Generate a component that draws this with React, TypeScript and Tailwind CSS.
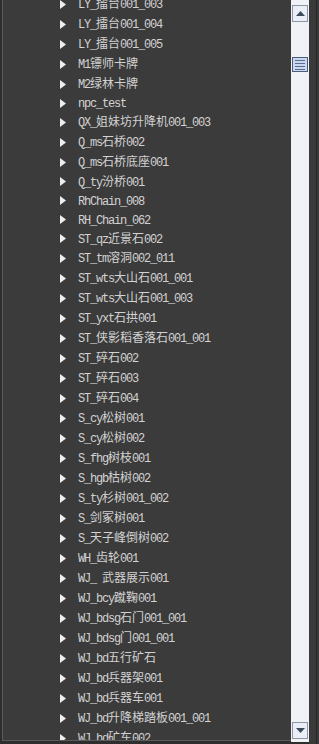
const items: { label: string; h: number }[] = [
  { label: "LY_擂台001_003", h: 20 },
  { label: "LY_擂台001_004", h: 20 },
  { label: "LY_擂台001_005", h: 20 },
  { label: "M1镖师卡牌", h: 20 },
  { label: "M2绿林卡牌", h: 20 },
  { label: "npc_test", h: 18 },
  { label: "QX_姐妹坊升降机001_003", h: 20 },
  { label: "Q_ms石桥002", h: 20 },
  { label: "Q_ms石桥底座001", h: 20 },
  { label: "Q_ty汾桥001", h: 19 },
  { label: "RhChain_008", h: 19 },
  { label: "RH_Chain_062", h: 19 },
  { label: "ST_qz近景石002", h: 19 },
  { label: "ST_tm溶洞002_011", h: 20 },
  { label: "ST_wts大山石001_001", h: 20 },
  { label: "ST_wts大山石001_003", h: 20 },
  { label: "ST_yxt石拱001", h: 20 },
  { label: "ST_侠影稻香落石001_001", h: 20 },
  { label: "ST_碎石002", h: 20 },
  { label: "ST_碎石003", h: 20 },
  { label: "ST_碎石004", h: 20 },
  { label: "S_cy松树001", h: 20 },
  { label: "S_cy松树002", h: 20 },
  { label: "S_fhg树枝001", h: 20 },
  { label: "S_hgb枯树002", h: 20 },
  { label: "S_ty杉树001_002", h: 20 },
  { label: "S_剑冢树001", h: 20 },
  { label: "S_天子峰倒树002", h: 20 },
  { label: "WH_齿轮001", h: 20 },
  { label: "WJ_ 武器展示001", h: 20 },
  { label: "WJ_bcy蹴鞠001", h: 20 },
  { label: "WJ_bdsg石门001_001", h: 20 },
  { label: "WJ_bdsg门001_001", h: 20 },
  { label: "WJ_bd五行矿石", h: 20 },
  { label: "WJ_bd兵器架001", h: 20 },
  { label: "WJ_bd兵器车001", h: 20 },
  { label: "WJ_bd升降梯踏板001_001", h: 20 },
  { label: "WJ_bd矿车002", h: 20 },
];

const rowHeight: Record<number, string> = {
  18: "h-[18px]",
  19: "h-[19px]",
  20: "h-[20px]",
};

// ascii runs in a mono face squeezed to a 6px advance, CJK runs at 12px, one baseline
function Label({ text }: { text: string }) {
  const parts = text.match(/[\x00-\xff]+|[^\x00-\xff]+/g) ?? [];
  return (
    <span className="block whitespace-pre text-[#d2d2d2] leading-[13px]">
      {parts.map((p, i) =>
        /^[\x00-\xff]/.test(p) ? (
          <span
            key={i}
            className="font-['Liberation_Mono',monospace] text-[12px] tracking-[-1.2px]"
          >
            {p}
          </span>
        ) : (
          <span
            key={i}
            className="font-['Noto_Sans_CJK_SC',sans-serif] text-[12px]"
          >
            {p}
          </span>
        )
      )}
    </span>
  );
}

function Arrow() {
  return (
    <svg width="6" height="9" viewBox="0 0 6 9" className="shrink-0">
      <polygon points="0,0 6,4.5 0,9" fill="#eeeeee" />
    </svg>
  );
}

function ScrollButton({ dir }: { dir: "up" | "down" }) {
  return (
    <div className="w-[16px] h-[17px] border border-[#8d96a3] bg-[#e9eef7] flex items-center justify-center">
      <svg width="9" height="5" viewBox="0 0 9 5">
        <polygon
          points={dir === "up" ? "0,5 9,5 4.5,0" : "0,0 9,0 4.5,5"}
          fill="#3d4a5c"
        />
      </svg>
    </div>
  );
}

function Scrollbar() {
  return (
    <div className="w-[18px] h-[742px] bg-[#f1f2f5] flex flex-col pl-[1px] pt-[5px]">
      <ScrollButton dir="up" />
      <div className="mt-[35px] w-[16px] h-[15px] border border-[#4d5e7c] bg-[#c9d8ef] flex flex-col items-center justify-center gap-[2px]">
        <div className="w-[10px] h-px bg-[#5a6d8f]" />
        <div className="w-[10px] h-px bg-[#5a6d8f]" />
        <div className="w-[10px] h-px bg-[#5a6d8f]" />
        <div className="w-[10px] h-px bg-[#5a6d8f]" />
      </div>
      <div className="flex-1" />
      <div className="mb-[3px]">
        <ScrollButton dir="down" />
      </div>
    </div>
  );
}

export default function App() {
  return (
    <div className="w-[319px] h-[744px] bg-[#2e2e2e] flex overflow-hidden">
      <div className="ml-[2px] w-[289px] h-[741px] border-l border-b border-[#5b5b5b] bg-[#3b3b3b] overflow-hidden">
        <div className="mt-[-6px] flex flex-col">
          {items.map((item) => (
            <div
              key={item.label}
              className={`${rowHeight[item.h]} flex items-center pl-[57px] shrink-0`}
            >
              <Arrow />
              <div className="ml-[12px]">
                <Label text={item.label} />
              </div>
            </div>
          ))}
        </div>
      </div>
      <Scrollbar />
      <div className="w-[10px] h-[744px] bg-[#3a3a3a] flex">
        <div className="ml-[7px] w-px h-full bg-[#262626]" />
      </div>
    </div>
  );
}
